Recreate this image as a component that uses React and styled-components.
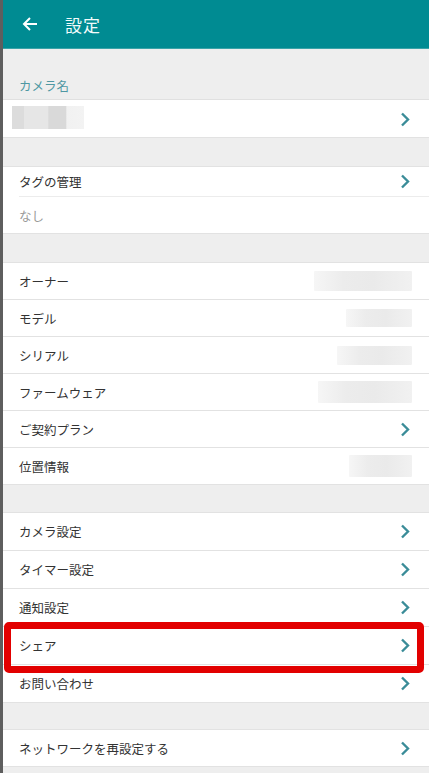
import React from "react";
import styled, { createGlobalStyle } from "styled-components";

const Global = createGlobalStyle`
  html, body { margin: 0; padding: 0; background: #eeeeee; }
  body { font-family: "Noto Sans CJK JP", "Noto Sans", Roboto, sans-serif; }
  * { box-sizing: border-box; }
`;

const Frame = styled.div`
  width: 429px;
  min-height: 773px;
  border-left: 3px solid #5e5e5e;
  background: #eeeeee;
  display: flex;
  flex-direction: column;
`;

const Header = styled.header`
  height: 49px;
  background: #008b92;
  border-bottom: 1px solid #3aa3a8;
  display: flex;
  align-items: center;
  padding-left: 19px;
  gap: 27px;
  color: #fff;
`;

const Title = styled.h1`
  margin: 0;
  font-size: 17px;
  font-weight: 400;
  letter-spacing: 1px;
  color: #f2fbfb;
`;

const LabelBand = styled.div`
  height: 51px;
  display: flex;
  align-items: flex-end;
  padding: 0 0 4px 16px;
  font-size: 12.5px;
  color: #4f98a3;
  border-bottom: 1px solid #e0e0e0;
`;

const Gap = styled.div`
  height: ${(p) => p.h}px;
  flex: none;
`;

const Group = styled.div`
  background: #fff;
  border-top: 1px solid ${(p) => (p.flush ? "transparent" : "#e2e2e2")};
  display: flex;
  flex-direction: column;
`;

const Row = styled.div`
  position: relative;
  height: ${(p) => p.h || 37}px;
  flex: none;
  display: flex;
  align-items: center;
  justify-content: space-between;
  padding: 0 17px 0 16px;
  border-bottom: 1px solid ${(p) => (p.inset ? "transparent" : "#e2e2e2")};
  font-size: 12.5px;
  color: ${(p) => (p.muted ? "#9a9a9a" : "#333333")};
  ${(p) =>
    p.inset &&
    `&::after { content: ""; position: absolute; left: 16px; right: 0; bottom: -1px; height: 1px; background: #ececec; }`}
`;

const Blur = styled.div`
  width: ${(p) => p.w}px;
  height: ${(p) => p.hh}px;
  background: linear-gradient(90deg, #f6f6f6 0%, #ececec 30%, #eaeaea 60%, #f1f1f1 100%);
  border-radius: 1px;
`;

const NameBlur = styled.div`
  position: absolute;
  left: 9px;
  top: 5px;
  width: 72px;
  height: 23px;
  background: linear-gradient(90deg, #dcdcdc 0%, #dcdcdc 16%, #e6e6e6 17%, #e6e6e6 50%, #d9d9d9 51%, #d9d9d9 75%, #f1f1f1 76%, #f3f3f3 100%);
`;

const Highlight = styled.div`
  position: absolute;
  left: 1px;
  right: 5px;
  top: -5px;
  bottom: -9px;
  border: 7px solid #e20000;
  border-radius: 5px;
  pointer-events: none;
  z-index: 2;
`;

const Chevron = () => (
  <svg width="10" height="15" viewBox="0 0 10 15" style={{ marginRight: 2 }}>
    <polyline points="2,1.5 8,7.5 2,13.5" fill="none" stroke="#3a8c98" strokeWidth="2.4" />
  </svg>
);

const BackArrow = () => (
  <svg width="16" height="16" viewBox="0 0 16 16">
    <path d="M15 8H2.5M8 2L2 8l6 6" fill="none" stroke="#fff" strokeWidth="2" />
  </svg>
);

export default function App() {
  return (
    <>
      <Global />
      <Frame>
        <Header>
          <BackArrow />
          <Title>設定</Title>
        </Header>
        <LabelBand>カメラ名</LabelBand>
        <Group flush>
          <Row h={37}>
            <NameBlur />
            <span />
            <Chevron />
          </Row>
        </Group>
        <Gap h={28} />
        <Group>
          <Row h={30} inset>
            タグの管理
            <Chevron />
          </Row>
          <Row h={37} muted>なし</Row>
        </Group>
        <Gap h={28} />
        <Group>
          <Row>
            オーナー
            <Blur w={98} hh={20} />
          </Row>
          <Row>
            モデル
            <Blur w={66} hh={18} />
          </Row>
          <Row>
            シリアル
            <Blur w={75} hh={19} />
          </Row>
          <Row>
            ファームウェア
            <Blur w={94} hh={22} />
          </Row>
          <Row>
            ご契約プラン
            <Chevron />
          </Row>
          <Row>
            位置情報
            <Blur w={63} hh={22} />
          </Row>
        </Group>
        <Gap h={27} />
        <Group>
          <Row h={38}>
            カメラ設定
            <Chevron />
          </Row>
          <Row h={38}>
            タイマー設定
            <Chevron />
          </Row>
          <Row h={38}>
            通知設定
            <Chevron />
          </Row>
          <Row h={38}>
            シェア
            <Chevron />
            <Highlight />
          </Row>
          <Row h={38}>
            お問い合わせ
            <Chevron />
          </Row>
        </Group>
        <Gap h={26} />
        <Group>
          <Row>
            ネットワークを再設定する
            <Chevron />
          </Row>
        </Group>
      </Frame>
    </>
  );
}
